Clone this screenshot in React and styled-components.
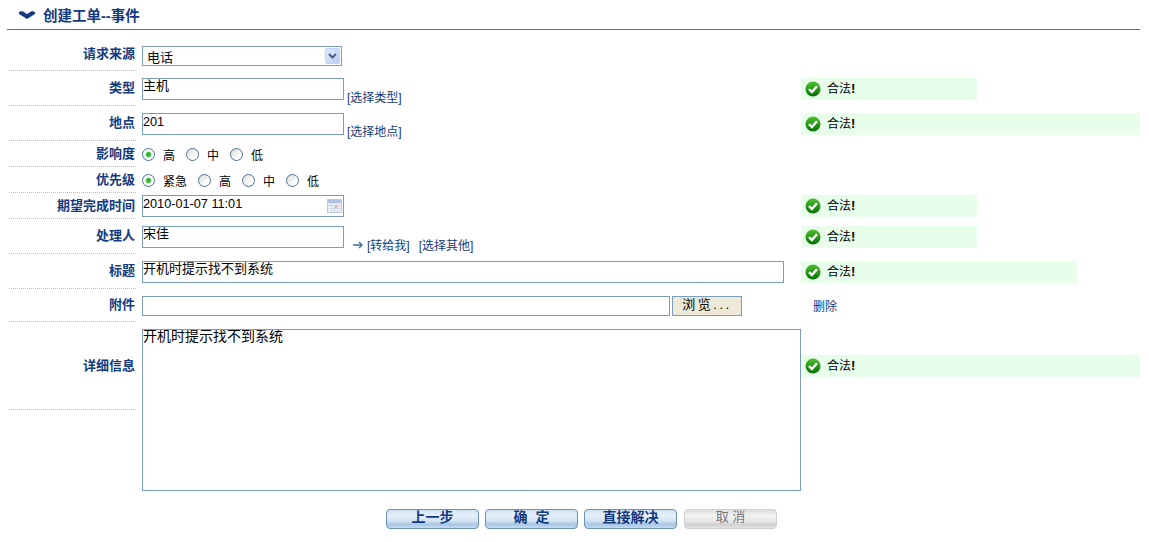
import React from "react";
import styled, { createGlobalStyle } from "styled-components";

const GlobalStyle = createGlobalStyle`
    html, body {
        margin: 0;
        padding: 0;
        background: #fff;
    }

    body {
        font-family: "Liberation Sans", "Noto Sans CJK SC", sans-serif;
        font-size: 12px;
        color: #000;
    }

    * {
        box-sizing: border-box;
    }
`;

const Page = styled.div`
    width: 1149px;
    height: 542px;
    overflow: hidden;
    padding-left: 7px;
`;

const TitleBar = styled.div`
    width: 1133px;
    height: 30px;
    border-bottom: 1px solid #44709e;
    display: flex;
    align-items: center;
    gap: 8px;
    padding: 0 0 1px 12px;
`;

const TitleChevron = styled.svg`
    margin-top: 2px;
`;

const TitleText = styled.h1`
    margin: 0;
    font-size: 14.5px;
    font-weight: 700;
    color: #143b80;
`;

const Form = styled.div`
    padding: 8px 0 0 2px;
`;

const Row = styled.div`
    display: flex;
    align-items: flex-start;
`;

const Label = styled.div`
    width: 127px;
    height: ${props => props.$height}px;
    flex-shrink: 0;
    border-bottom: 1px dotted #bbb;
    display: flex;
    align-items: center;
    justify-content: flex-end;
    font-size: 13px;
    font-weight: 700;
    color: #143b80;
    padding: 0 1px 3px 0;
`;

const Field = styled.div`
    width: 659px;
    flex-shrink: 0;
    margin-left: 6px;
    padding-top: ${props => props.$top}px;
    display: flex;
    align-items: flex-start;
`;

const StatusCell = styled.div`
    flex: 1;
    padding-top: ${props => props.$top}px;
    padding-right: 9px;
`;

const Status = styled.div`
    width: ${props => props.$width ? `${props.$width}px` : "100%"};
    height: 22px;
    background: #e8fdea;
    display: flex;
    align-items: center;
    gap: 6px;
    padding-left: 4px;
`;

const StatusText = styled.span`
    padding-bottom: 3px;
`;

const StatusBang = styled.b`
    font-size: 13px;
    font-weight: 900;
`;

const TextInput = styled.input`
    display: block;
    width: ${props => props.$width}px;
    height: ${props => props.$height || 22}px;
    flex-shrink: 0;
    border: 1px solid #7b9cbc;
    border-radius: 0;
    outline: none;
    background: #fff;
    padding: 0 0 ${props => props.$latin ? 4 : 9}px 0;
    margin: 0;
    font: inherit;
    font-size: ${props => props.$latin ? 12.7 : 13}px;
    color: #000;
`;

const DateWrap = styled.div`
    position: relative;
    width: 202px;
`;

const CalendarIcon = styled.svg`
    position: absolute;
    right: 2px;
    top: 4px;
`;

const SelectBox = styled.div`
    width: 200px;
    height: 20px;
    border: 1px solid #7b9cbc;
    display: flex;
    align-items: center;
    justify-content: space-between;
    padding: 0 1px 0 4px;
    font-size: 13px;
`;

const SelectArrow = styled.span`
    width: 15px;
    height: 16px;
    background: linear-gradient(135deg, #e3eafc, #b9cbf4);
    border: 1px solid #c3d2f5;
    border-radius: 2px;
    display: flex;
    align-items: center;
    justify-content: center;
`;

const SmallLink = styled.a`
    color: #143b80;
    white-space: nowrap;
    margin-left: ${props => props.$left || 0}px;
    margin-top: ${props => props.$top || 0}px;
`;

const ArrowIcon = styled.svg`
    margin: 15px 0 0 9px;
`;

const RadioGroup = styled.div`
    display: flex;
    align-items: center;
    height: 14px;
`;

const RadioItem = styled.label`
    display: flex;
    align-items: center;
    gap: 8px;
    margin-right: 11px;
`;

const RadioDot = styled.span`
    width: 13px;
    height: 13px;
    border-radius: 50%;
    border: 1px solid #4d7296;
    background: ${props => props.$on
        ? "radial-gradient(circle, #2fb52f 0 2px, #dff0df 3px, #fff 5px)"
        : "linear-gradient(135deg, #dcdcd6, #fff 75%)"};
`;

const BrowseButton = styled.button`
    width: 70px;
    height: 20px;
    margin: 0 0 0 2px;
    padding: 0 0 3px;
    border: 1px solid #7b9cbc;
    border-radius: 0;
    background: #ece9d8;
    font: inherit;
    font-size: 13px;
    line-height: 13px;
    letter-spacing: 2.5px;
    color: #000;
`;

const DeleteLink = styled.a`
    color: #143b80;
    display: block;
    padding: 1px 0 0 12px;
`;

const DetailArea = styled.textarea`
    display: block;
    width: 659px;
    height: 162px;
    border: 1px solid #7b9cbc;
    border-radius: 0;
    outline: none;
    resize: none;
    padding: 0;
    margin: 0;
    font: inherit;
    font-size: 14px;
    line-height: 13px;
    color: #000;
`;

const ButtonBar = styled.div`
    display: flex;
    gap: 6px;
    margin-top: 18px;
    padding-left: 379px;
`;

const ActionButton = styled.button`
    width: 93px;
    height: 20px;
    margin: 0 0 0 ${props => props.disabled ? 1 : 0}px;
    padding: 0 0 5px;
    border-radius: 4px;
    font: inherit;
    font-size: ${props => props.disabled ? 13 : 14}px;
    line-height: 14px;
    white-space: pre;
    border: 1px solid ${props => props.disabled ? "#d0d0d0" : "#6c93b8"};
    color: ${props => props.disabled ? "#777" : "#143b80"};
    font-weight: ${props => props.disabled ? 400 : 700};
    background: ${props => props.disabled
        ? "linear-gradient(#dcdcdc, #f2f2f2 30%, #e6e6e6 65%, #cfcfcf 80%, #e2e2e2)"
        : "linear-gradient(#cfe1f3, #e6f0fa 30%, #d3e3f3 60%, #a8c7e4 80%, #c6dbef)"};
`;

const CheckMark = () => (
    <svg width="16" height="16" viewBox="0 0 16 16">
        <defs>
            <linearGradient id="okFill" x1="0" y1="0" x2="0" y2="1">
                <stop offset="0" stopColor="#50c030" />
                <stop offset="1" stopColor="#047004" />
            </linearGradient>
        </defs>
        <circle cx="8" cy="8" r="7.5" fill="url(#okFill)" />
        <path d="M4 8.2 L6.9 11 L12 5.2" fill="none" stroke="#fff" strokeWidth="2.4" />
    </svg>
);

const OkStatus = ({ width }) => (
    <Status $width={width}>
        <CheckMark />
        <StatusText>合法<StatusBang>!</StatusBang></StatusText>
    </Status>
);

const Radios = ({ options }) => (
    <RadioGroup>
        {
            options.map((option, index) => (
                <RadioItem key={option}>
                    <RadioDot $on={index === 0} />
                    {option}
                </RadioItem>
            ))
        }
    </RadioGroup>
);

const App = () => {
    return (
        <Page>
            <GlobalStyle />
            <TitleBar>
                <TitleChevron width="16" height="8" viewBox="0 0 16 8">
                    <path d="M0 1 L3 0 L8 3 L13 0 L16 1 L16 3 L8 8 L0 3 Z" fill="#143b80" />
                </TitleChevron>
                <TitleText>创建工单--事件</TitleText>
            </TitleBar>

            <Form>
                <Row>
                    <Label $height={33}>请求来源</Label>
                    <Field $top={8}>
                        <SelectBox>
                            电话
                            <SelectArrow>
                                <svg width="9" height="6" viewBox="0 0 9 6">
                                    <path d="M1 1 L4.5 4.5 L8 1" fill="none" stroke="#4d6185" strokeWidth="2" />
                                </svg>
                            </SelectArrow>
                        </SelectBox>
                    </Field>
                </Row>

                <Row>
                    <Label $height={35}>类型</Label>
                    <Field $top={7}>
                        <TextInput $width={202} readOnly value="主机" />
                        <SmallLink $left={3} $top={10}>[选择类型]</SmallLink>
                    </Field>
                    <StatusCell $top={7}><OkStatus width={176} /></StatusCell>
                </Row>

                <Row>
                    <Label $height={35}>地点</Label>
                    <Field $top={7}>
                        <TextInput $width={202} readOnly value="201" $latin />
                        <SmallLink $left={3} $top={9}>[选择地点]</SmallLink>
                    </Field>
                    <StatusCell $top={7}><OkStatus /></StatusCell>
                </Row>

                <Row>
                    <Label $height={26}>影响度</Label>
                    <Field $top={6}>
                        <Radios options={["高", "中", "低"]} />
                    </Field>
                </Row>

                <Row>
                    <Label $height={26}>优先级</Label>
                    <Field $top={6}>
                        <Radios options={["紧急", "高", "中", "低"]} />
                    </Field>
                </Row>

                <Row>
                    <Label $height={26}>期望完成时间</Label>
                    <Field $top={2}>
                        <DateWrap>
                            <TextInput $width={202} readOnly value="2010-01-07 11:01" $latin />
                            <CalendarIcon width="15" height="14" viewBox="0 0 15 14">
                                <rect x="0.5" y="0.5" width="14" height="13" fill="#eef2f8" stroke="#bccadb" />
                                <rect x="1" y="1" width="13" height="3" fill="#adc3de" />
                                <path d="M1 6.5 H14 M1 9.5 H14 M4.5 4 V13 M7.5 4 V13 M10.5 4 V13" stroke="#cdd8e6" strokeWidth="1" />
                                <rect x="8" y="7" width="2" height="2" fill="#e8a89c" />
                            </CalendarIcon>
                        </DateWrap>
                    </Field>
                    <StatusCell $top={2}><OkStatus width={176} /></StatusCell>
                </Row>

                <Row>
                    <Label $height={35}>处理人</Label>
                    <Field $top={7}>
                        <TextInput $width={202} readOnly value="宋佳" />
                        <ArrowIcon width="10" height="8" viewBox="0 0 10 8">
                            <path d="M0 4 H9 M6 1 L9 4 L6 7" fill="none" stroke="#44709e" strokeWidth="1.5" />
                        </ArrowIcon>
                        <SmallLink $left={4} $top={10}>[转给我]</SmallLink>
                        <SmallLink $left={9} $top={10}>[选择其他]</SmallLink>
                    </Field>
                    <StatusCell $top={7}><OkStatus width={176} /></StatusCell>
                </Row>

                <Row>
                    <Label $height={35}>标题</Label>
                    <Field $top={7}>
                        <TextInput $width={642} readOnly value="开机时提示找不到系统" />
                    </Field>
                    <StatusCell $top={7}><OkStatus width={276} /></StatusCell>
                </Row>

                <Row>
                    <Label $height={33}>附件</Label>
                    <Field $top={7}>
                        <TextInput $width={528} $height={20} readOnly />
                        <BrowseButton>浏览...</BrowseButton>
                    </Field>
                    <StatusCell $top={7}><DeleteLink>删除</DeleteLink></StatusCell>
                </Row>

                <Row>
                    <Label $height={88}>详细信息</Label>
                    <Field $top={7}>
                        <DetailArea readOnly value="开机时提示找不到系统" />
                    </Field>
                    <StatusCell $top={33}><OkStatus /></StatusCell>
                </Row>
            </Form>

            <ButtonBar>
                <ActionButton>上一步</ActionButton>
                <ActionButton>确  定</ActionButton>
                <ActionButton>直接解决</ActionButton>
                <ActionButton disabled>取 消</ActionButton>
            </ButtonBar>
        </Page>
    );
};

export default App;
